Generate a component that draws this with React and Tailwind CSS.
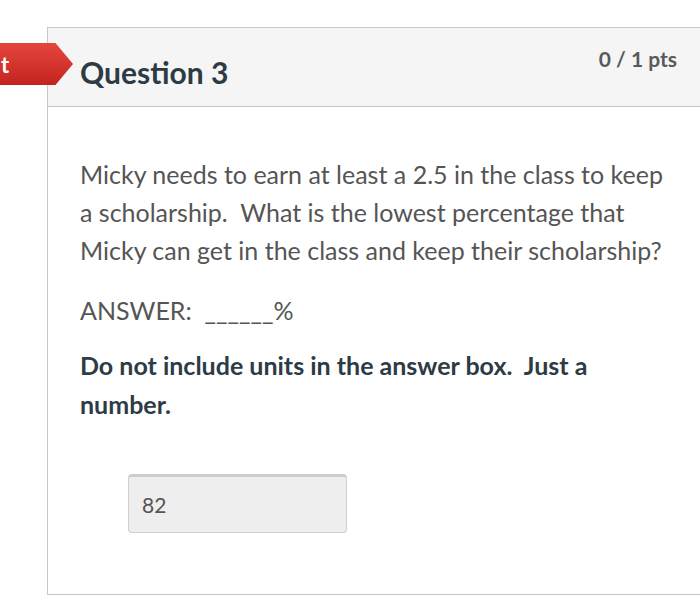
export default function App() {
  return (
    <div className="relative w-[700px] h-[601px] overflow-hidden bg-white" style={{ fontFamily: 'Lato, "Open Sans", sans-serif' }}>
      <div className="ml-[47px] mt-[27px] w-[700px] h-[568px] border-l border-t border-b border-[#c7c7c7]">
        <div className="h-[79px] bg-[#f5f5f5] border-b border-[#c7c7c7] pl-[32px]">
          <h2 className="pt-[25px] text-[30px] leading-[38px] font-bold text-[#2d3b45] whitespace-nowrap">Question 3</h2>
        </div>
        <div className="pl-[32px] pt-[48px] w-[640px]">
          <p className="w-[592px] text-[25px] leading-[38px] text-[#555555]">
            Micky needs to earn at least a 2.5 in the class to keep a scholarship.&nbsp; What is the lowest percentage that Micky can get in the class and keep their scholarship?
          </p>
          <p className="mt-[22px] text-[25px] leading-[38px] text-[#555555]">ANSWER:&nbsp; ______%</p>
          <p className="mt-[17px] text-[25px] leading-[39px] font-bold text-[#2d3b45] w-[560px]">
            Do not include units in the answer box.&nbsp; Just a number.
          </p>
          <div className="mt-[50px] ml-[48px] w-[219px] h-[59px] rounded-[4px] bg-[#eeeeee] border border-[#cfcfcf] border-t-[3px] border-t-[#cccccc] flex items-center pl-[13px] text-[21px] text-[#555555]">
            82
          </div>
        </div>
      </div>
      <div className="absolute top-[46px] right-[23px] text-[21px] leading-[26px] font-bold text-[#5a5a5a]">0 / 1 pts</div>
      <div className="absolute left-0 top-[43px] w-[73px] h-[42px] bg-gradient-to-b from-[#e5453d] to-[#c3231f] [clip-path:polygon(0_0,76%_0,100%_50%,76%_100%,0_100%)] flex items-center">
        <span className="ml-[1px] text-[22px] font-bold text-white">t</span>
      </div>
    </div>
  );
}
